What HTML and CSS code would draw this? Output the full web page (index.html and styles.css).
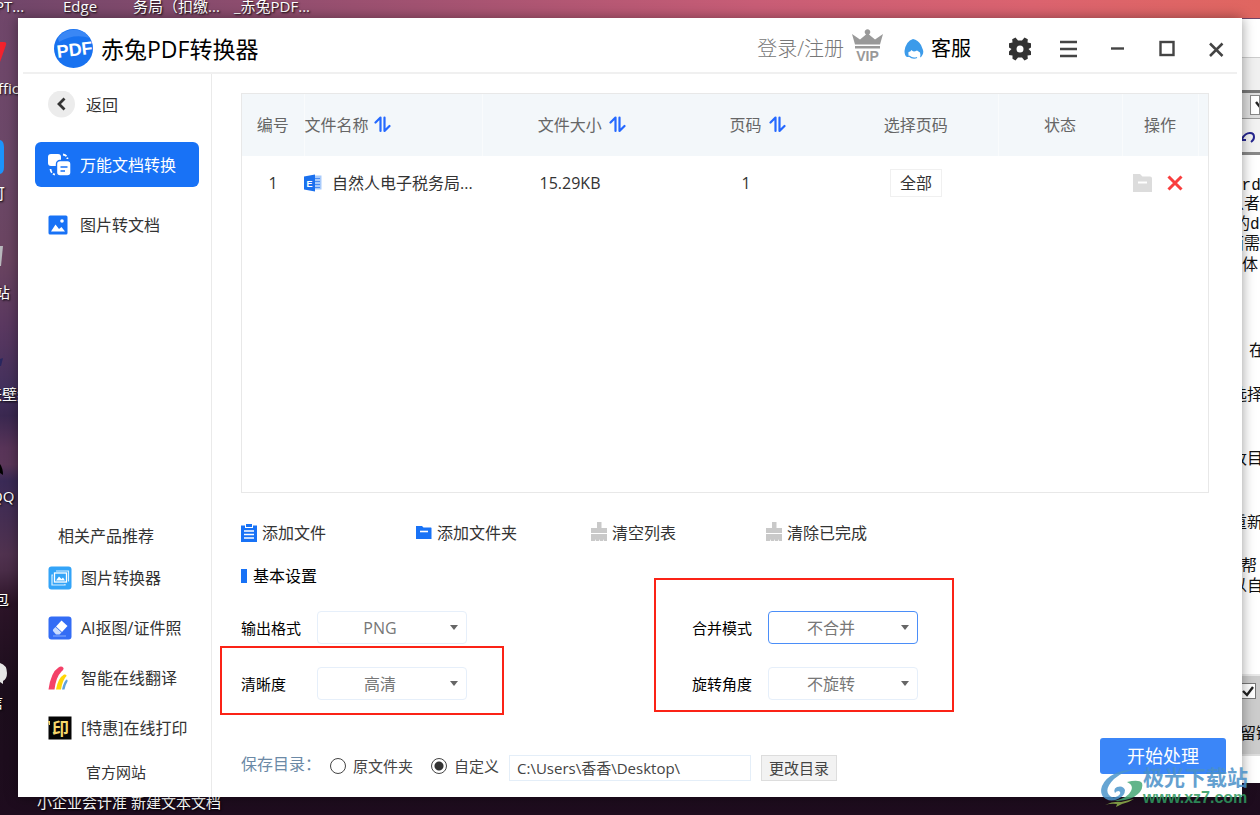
FILE: index.html
```html
<!DOCTYPE html>
<html lang="zh-CN">
<head>
<meta charset="utf-8">
<title>赤兔PDF转换器</title>
<meta name="viewport" content="width=device-width, initial-scale=1">
<link rel="stylesheet" href="styles.css">
</head>
<body>
<div class="desktop">
  <!-- desktop labels and shortcut edges -->
  <span class="desk-label lab-ppt">PT...</span>
  <span class="desk-label lab-edge">Edge</span>
  <span class="desk-label lab-tax">务局（扣缴...</span>
  <span class="desk-label lab-pdf">_赤兔PDF...</span>
  <span class="desk-label lab-office">ffic</span>
  <span class="desk-label lab-cai">可</span>
  <span class="desk-label lab-bin">站</span>
  <span class="desk-label lab-wall">来壁纸</span>
  <span class="desk-label lab-qq">QQ</span>
  <span class="desk-label lab-bao">包</span>
  <span class="desk-label lab-xin">信</span>
  <span class="desk-label lab-docs">小企业会计准 新建文本文档</span>
  <svg class="shortcut sc-red" width="8" height="22" viewBox="0 0 8 22" aria-hidden="true"><path d="M0 1h4q3 0 2 3L0 21z" fill="#f3222c"/></svg>
  <svg class="shortcut sc-blue" width="5" height="34" viewBox="0 0 5 34" aria-hidden="true"><path d="M0 0q4 1 4 7v20q0 6-4 7z" fill="#1c93fb"/></svg>
  <svg class="shortcut sc-bin" width="5" height="22" viewBox="0 0 5 22" aria-hidden="true"><path d="M0 0h3L1 20H0z" fill="#b9b9bd"/></svg>
  <svg class="shortcut sc-wall" width="5" height="10" viewBox="0 0 5 10" aria-hidden="true"><path d="M0 2l3-1-2 8H0z" fill="#29265e"/></svg>
  <svg class="shortcut sc-qq" width="5" height="14" viewBox="0 0 5 14" aria-hidden="true"><path d="M0 1q3 4 3 11l-3-2z" fill="#000"/></svg>
  <svg class="shortcut sc-wx" width="8" height="24" viewBox="0 0 8 24" aria-hidden="true"><path d="M0 1q7 2 7 10 0 6-4 8v3l-3-2z" fill="#e6e6e6"/></svg>

  <!-- document window behind the app -->
  <aside class="doc">
    <div class="doc-title"></div>
    <div class="doc-menu"></div>
    <div class="doc-combo"><span class="doc-drop"><svg width="10" height="18" viewBox="0 0 10 18" aria-hidden="true"><path d="M5 6l4 5" stroke="#222" stroke-width="2.400"/></svg></span></div>
    <div class="doc-tools"><svg width="16" height="14" viewBox="0 0 16 14" aria-hidden="true"><path d="M1 9h5M1 9V5M2 8q3-6 8-6 4 0 4 4 0 3-3 5" fill="none" stroke="#25258f" stroke-width="2"/></svg></div>
    <div class="doc-page">
      <span class="line l1">ord]</span>
      <span class="line l2">以者</span>
      <span class="line l3">的d</span>
      <span class="line l4">面需</span>
      <span class="line l5">体:</span>
      <span class="line l6">在</span>
      <span class="line l7">选择</span>
      <span class="line l8">改目</span>
      <span class="line l9">重新</span>
      <span class="line l10">帮.</span>
      <span class="line l11">以自</span>
    </div>
    <div class="doc-panel"><svg width="16" height="16" viewBox="0 0 16 16" aria-hidden="true"><rect x=".5" y=".5" width="15" height="15" fill="#fff" stroke="#777"/><path d="M3 8l4 4 6-8" fill="none" stroke="#222" stroke-width="2.4"/></svg><span>留链</span></div>
    <div class="doc-status"></div>
  </aside>

  <div class="window">
    <header class="titlebar">
      <svg class="logo" width="39" height="39" viewBox="0 0 39 39" aria-hidden="true"><circle cx="19.500" cy="19.500" r="19.500" fill="#1872f0"/><path d="M5 13Q20 4 36 9A19.500 19.500 0 0 0 4 9z" fill="#3a87f5"/><text class="logo-text" x="20.500" y="27" text-anchor="middle" transform="rotate(-7 19.500 19.500)">PDF</text></svg>
      <h1 class="app-name">赤兔PDF转换器</h1>
      <a class="login" href="#">登录/注册</a>
      <a class="vip" href="#" aria-label="VIP"><svg width="31" height="33" viewBox="0 0 31 33"><path d="M0 5l8 5.500L14 5.500a2.800 2.800 0 1 1 3 0l6 5L31 5l-3 10.500H3zM3 17h25v2.500H3z" fill="#999"/><text class="vip-text" x="15.500" y="31.500" text-anchor="middle">VIP</text></svg></a>
      <a class="service" href="#"><svg width="20" height="20" viewBox="0 0 20 20" aria-hidden="true"><path d="M9 0Q14 1 17 6l2 5q1 3-1.500 6.500l-1.500 1q.8-3 0-5l-3-2q-4 2-5.500-.5-1 2-3 2-.5 2 .5 5L3 18Q.500 17 .500 12 2 2 9 0z" fill="#3c9bea"/><path d="M5 17q4 3.500 8 1.500" fill="none" stroke="#3c9bea" stroke-width="1.200"/></svg><span>客服</span></a>
      <div class="controls">
        <button aria-label="设置"><svg width="24" height="24" viewBox="-12 -12 24 24"><path fill-rule="evenodd" d="M-2-8.500-4.500-11.500-7.800-9.800-7.500-6.500-11-5.800-11-1.500-8.500 0-11 2.500-11 6-7.500 6.500-7.500 9.800-4.500 11.500-2 8.500 2 8.500 4.500 11.500 7.800 9.800 7.500 6.500 11 6 11 2.500 8.500 0 11-1.500 11-5.800 7.500-6.500 7.800-9.800 4.500-11.500 2-8.500zM0-3.500a3.500 3.500 0 1 1 0 7 3.500 3.500 0 0 1 0-7z" fill="#333"/></svg></button>
        <button aria-label="菜单"><svg width="24" height="24" viewBox="0 0 24 24"><path d="M3 5h17M3 12h17M3 19h17" stroke="#444" stroke-width="2.400"/></svg></button>
        <button aria-label="最小化"><svg width="24" height="24" viewBox="0 0 24 24"><path d="M5 11.500h13" stroke="#444" stroke-width="2.400"/></svg></button>
        <button aria-label="最大化"><svg width="24" height="24" viewBox="0 0 24 24"><rect x="5.500" y="5" width="13" height="13" fill="none" stroke="#444" stroke-width="2.400"/></svg></button>
        <button aria-label="关闭"><svg width="24" height="24" viewBox="0 0 24 24"><path d="M6 6.500l12.500 12.500M18.500 6.500L6 19" stroke="#444" stroke-width="2.500"/></svg></button>
      </div>
    </header>

    <div class="body">
      <nav class="sidebar">
        <button class="nav-item back"><svg width="28" height="28" viewBox="0 0 28 28" aria-hidden="true"><circle cx="13.500" cy="13" r="13.500" fill="#ececec"/><path d="M16.500 7.500L11 13l5.500 5.500" fill="none" stroke="#333" stroke-width="2.800"/></svg><span>返回</span></button>
        <button class="nav-item active"><svg width="23" height="23" viewBox="0 0 23 23" aria-hidden="true"><rect x="0" y="1" width="13" height="12" rx="3" fill="#fff"/><rect x="8.500" y="7.500" width="14.500" height="15.500" rx="3.500" fill="#fff" stroke="#1872f6" stroke-width="1.400"/><path d="M12.500 14h7M12.500 18h4.500" stroke="#1872f6" stroke-width="1.700"/><path d="M15 1.500q4 .5 4.500 4.500M2.500 16q.3 4.500 4.500 5.500" fill="none" stroke="#fff" stroke-width="1.800" stroke-dasharray="4 1.500"/></svg><span>万能文档转换</span></button>
        <button class="nav-item"><svg width="20" height="20" viewBox="0 0 20 20" aria-hidden="true"><rect x=".500" y=".500" width="19" height="19" rx="1.500" fill="#1872f6"/><circle cx="14" cy="6" r="1.800" fill="#fff"/><path d="M3 16.500l4.500-7 3.500 4.500 2.500-2 3.500 4.500z" fill="#fff"/></svg><span>图片转文档</span></button>

        <h2 class="promo-title">相关产品推荐</h2>
        <a class="promo" href="#"><svg width="24" height="24" viewBox="0 0 24 24" aria-hidden="true"><rect x=".500" y=".500" width="23" height="23" rx="3" fill="#33a4f8"/><rect x="6.500" y="7" width="12" height="9" fill="none" stroke="#fff" stroke-width="1.300"/><path d="M8 14.500l3-4 2.500 2.500 1.500-1.500 2 3z" fill="#fff"/><path d="M5 9H4v10h13v-1M8 5h12.500v10H20" fill="none" stroke="#d9f0ff" stroke-width="1.200"/></svg><span>图片转换器</span></a>
        <a class="promo" href="#"><svg width="24" height="24" viewBox="0 0 24 24" aria-hidden="true"><rect x=".500" y=".500" width="23" height="23" rx="3" fill="#336cf5"/><path d="M13.500 4.500l6 5.500-5.500 6-6-5.500z" fill="#fff"/><path d="M7.500 11l6 5.500-2 2H8L5 15q-.5-1 .5-2z" fill="#c9dcff"/><path d="M5 20h13" stroke="#86adff"/></svg><span>AI抠图/证件照</span></a>
        <a class="promo" href="#"><svg width="24" height="24" viewBox="0 0 24 24" aria-hidden="true"><path d="M.500 23.500Q3 6 10.500 1.500q3-2 5 .5.500 1.500-2 3.500Q8 11 6.500 23.500z" fill="#f44168"/><path d="M8 23.500Q10 12 16 8.500q3-.5 2.500 1.500-4 4-5.500 13.500z" fill="#ffd507"/><path d="M14 23.500Q15.500 16 18.500 13.500q1.500 0 1 2-2 3-3 8z" fill="#61a2d9"/></svg><span>智能在线翻译</span></a>
        <a class="promo" href="#"><svg width="24" height="24" viewBox="0 0 24 24" aria-hidden="true"><rect x=".500" y=".500" width="23" height="23" fill="#050505"/><path d="M0 5h2v4H1" fill="#f5d56c"/><text class="print-text" x="12.500" y="18.500" text-anchor="middle">印</text></svg><span>[特惠]在线打印</span></a>
        <a class="site" href="#">官方网站</a>
      </nav>

      <main class="main">
        <div class="table-wrap">
          <table class="files">
            <colgroup><col class="c-no"><col class="c-name"><col class="c-size"><col class="c-page"><col class="c-pick"><col class="c-state"><col class="c-act"><col class="c-end"></colgroup>
            <thead>
              <tr>
                <th class="ruled">编号</th>
                <th class="name ruled">文件名称<svg class="sort" width="17" height="17" viewBox="0 0 17 17" aria-hidden="true"><use href="#sort"/></svg></th>
                <th class="sortable">文件大小<svg class="sort" width="17" height="17" viewBox="0 0 17 17" aria-hidden="true"><use href="#sort"/></svg></th>
                <th class="sortable">页码<svg class="sort" width="17" height="17" viewBox="0 0 17 17" aria-hidden="true"><use href="#sort"/></svg></th>
                <th class="ruled">选择页码</th>
                <th class="ruled">状态</th>
                <th class="ruled">操作</th>
                <th></th>
              </tr>
            </thead>
            <tbody>
              <tr>
                <td>1</td>
                <td class="name"><span class="file"><svg width="18" height="18" viewBox="0 0 18 18" aria-hidden="true"><path d="M9 1.500h8.500v14H9z" fill="#a9cbfb"/><path d="M10 4.500h6M10 7.500h6M10 10.500h6M10 13.500h6" stroke="#4b8cf3"/><path d="M0 2.500L11 .500v17l-11-2z" fill="#1a70ee"/><text class="file-text" x="5.500" y="12.500" text-anchor="middle">E</text></svg><span>自然人电子税务局...</span></span></td>
                <td>15.29KB</td>
                <td>1</td>
                <td><button class="pick">全部</button></td>
                <td></td>
                <td><span class="actions">
                  <button aria-label="打开文件夹"><svg width="20" height="20" viewBox="0 0 20 20"><path d="M0 1h7l2.500 2.500H17q2 0 2 2V19H0z" fill="#dcdcdc"/><path d="M5 9.500h9" stroke="#fff" stroke-width="2"/></svg></button>
                  <button aria-label="删除"><svg width="16" height="16" viewBox="0 0 16 16"><path d="M1.500 1.500l13 13M14.500 1.500l-13 13" stroke="#f93e3e" stroke-width="3"/></svg></button>
                </span></td>
                <td></td>
              </tr>
            </tbody>
          </table>
        </div>

        <div class="toolbar">
          <button><svg width="16" height="18" viewBox="0 0 16 18" aria-hidden="true"><path d="M0 1.500h4V4h8V1.500h4V18H0z" fill="#1872f6"/><path d="M5 0h6v3H5z" fill="#1872f6"/><path d="M3 7h10M3 10.500h10M3 14h10" stroke="#fff" stroke-width="1.400"/></svg><span>添加文件</span></button>
          <button><svg width="16" height="18" viewBox="0 0 16 18" aria-hidden="true"><path d="M0 2h6l1.500 1.500H15L15.500 4v11H0z" fill="#1872f6"/><path d="M4 7.500h8" stroke="#fff" stroke-width="1.600"/></svg><span>添加文件夹</span></button>
          <button><svg width="16" height="22" viewBox="0 0 16 22" aria-hidden="true"><use href="#brush"/></svg><span>清空列表</span></button>
          <button><svg width="16" height="22" viewBox="0 0 16 22" aria-hidden="true"><use href="#brush"/></svg><span>清除已完成</span></button>
        </div>

        <section class="settings">
          <h2>基本设置</h2>
          <div class="fields">
            <div class="field"><label for="fmt">输出格式</label><span class="combo"><select id="fmt"><option>PNG</option></select></span></div>
            <div class="field"><label for="merge">合并模式</label><span class="combo focus"><select id="merge"><option>不合并</option></select></span></div>
            <div class="field"><label for="clear">清晰度</label><span class="combo"><select id="clear"><option>高清</option></select></span></div>
            <div class="field"><label for="rot">旋转角度</label><span class="combo"><select id="rot"><option>不旋转</option></select></span></div>
          </div>
          <div class="mark mark-clear"></div>
          <div class="mark mark-merge"></div>
        </section>

        <div class="footer">
          <span class="save-label">保存目录：</span>
          <label class="radio"><input type="radio" name="dir"><span>原文件夹</span></label>
          <label class="radio"><input type="radio" name="dir" checked><span>自定义</span></label>
          <input class="path" type="text" aria-label="保存目录" value="C:\Users\香香\Desktop\">
          <button class="change">更改目录</button>
          <button class="start">开始处理</button>
        </div>
      </main>
    </div>
  </div>

  <!-- watermark -->
  <div class="watermark">
    <svg width="42" height="38" viewBox="0 0 42 38" aria-hidden="true"><path d="M37 0Q22 2 13 10 3 20 8 26q3 4 9 1 4-3 1-5-3 0-4 2-2-4 2-6 6-2 8 3 0 6-7 9-7 3-12 0-7-4-4-13Q8 1 37 0z" fill="#4c96cc"/><path d="M26 13q12-3 15 1 2 8-8 14-8 4-20 4 14-3 17-10 3-6-4-9z" fill="#47a977"/><path d="M4 36q8-4 16-3l13-3q-6 4-12 5l-6 3 1-3q-6-1-12 1z" fill="#8fb04b"/></svg>
    <div class="wm-text"><span class="wm-name">极光下载站</span><span class="wm-url">www.xz7.com</span></div>
  </div>
</div>

<svg class="defs" width="0" height="0" aria-hidden="true">
  <defs>
    <g id="sort" fill="none" stroke="#2468ff" stroke-width="2.200" stroke-linecap="round" stroke-linejoin="round"><path d="M6.500 15V1.500L1.500 6.500"/><path d="M10.500 1.500V15l5-5"/></g>
    <g id="brush" fill="#c9c9c9"><path d="M6 0h4.500v6H16v5H0V6h6z"/><path d="M0 12h16v7h-3v-2l-1 2H9v-2l-1 2H5v-2l-1 2H0z"/></g>
  </defs>
</svg>
</body>
</html>
```
FILE: styles.css
```css
* { box-sizing: border-box; }

body {
  margin: 0;
  font-family: "Open Sans", "Noto Sans CJK SC", sans-serif;
  font-size: 16px;
  line-height: 24px;
  color: #333;
}

button, input, select { font: inherit; color: inherit; }
button { border: 0; padding: 0; background: none; white-space: nowrap; }
a { color: inherit; text-decoration: none; }
h1, h2 { margin: 0; font-weight: 400; }
svg { display: block; flex: none; }
.defs { position: absolute; }

/* desktop */
.desktop {
  position: relative;
  display: flex;
  min-height: 100vh;
  padding: 18px;
  overflow: hidden;
  background:
    linear-gradient(90deg, #70466a, #9a5070 28%, #c85d76 60%, #db636f 82%, #e06660) top / 100% 18px no-repeat,
    linear-gradient(#70466a, #6b4868 20%, #6a4460 32%, #5a3860 40%, #42305c 48%, #3a2850 51%, #583458 55%, #5a3658 57%, #3a2a56 59%, #50324f 68%, #4a2d48 70%, #2c1428 74%, #1c0e1c 85%, #1e0c1e);
}
.desk-label {
  position: absolute;
  font-size: 15px;
  line-height: 20px;
  color: #fff;
  white-space: pre;
  text-shadow: 1px 1px 2px #000;
}
.lab-ppt { left: -5px; top: -4px; }
.lab-edge { left: 63px; top: -4px; }
.lab-tax { left: 133px; top: -4px; }
.lab-pdf { left: 234px; top: -4px; }
.lab-office { left: -2px; top: 78px; }
.lab-cai { left: -10px; top: 183px; }
.lab-bin { left: -5px; top: 282px; }
.lab-wall { left: -13px; top: 384px; }
.lab-qq { left: -9px; top: 486px; }
.lab-bao { left: -6px; top: 589px; }
.lab-xin { left: -12px; top: 692px; }
.lab-docs { left: 37px; bottom: 3px; }
.shortcut { position: absolute; left: 0; }
.sc-red { top: 41px; }
.sc-blue { top: 140px; }
.sc-bin { top: 246px; }
.sc-wall { top: 357px; }
.sc-qq { top: 463px; }
.sc-wx { top: 662px; }

/* document window */
.doc {
  position: absolute;
  top: 19px;
  right: 0;
  bottom: 32px;
  width: 32px;
  display: flex;
  flex-direction: column;
  overflow: hidden;
  background: #fff;
  color: #111;
}
.doc-title { height: 39px; border-bottom: 1px solid #ccc; }
.doc-menu { height: 35px; background: #f0f0f0; border-bottom: 3px solid #777; }
.doc-combo { height: 26px; padding: 2px 0 2px 22px; background: #ddd; border-bottom: 1px solid #999; }
.doc-drop { display: block; height: 20px; background: #fff; border: 1px solid #888; overflow: hidden; }
.doc-tools { height: 36px; padding: 12px 0 0 12px; background: #f2f2f2; border-bottom: 3px solid #888; }
.doc-page { position: relative; flex: 1; }
.line { position: absolute; left: 0; font-family: "Liberation Mono", "Noto Sans CJK SC", monospace; line-height: 20px; white-space: nowrap; }
.l1 { left: 4px; top: 21px; }
.l2 { top: 40px; }
.l3 { left: 6px; top: 60px; }
.l4 { top: 80px; }
.l5 { left: 14px; top: 101px; }
.l6 { left: 21px; top: 187px; }
.l7 { left: 3px; top: 231px; }
.l8 { left: 3px; top: 295px; }
.l9 { left: 3px; top: 359px; }
.l10 { left: 13px; top: 402px; }
.l11 { left: 3px; top: 422px; }
.doc-panel { display: flex; flex-direction: column; gap: 24px; height: 80px; padding: 7px 0 0 12px; background: #ccc; border-top: 2px solid #e8e8e8; line-height: 20px; white-space: nowrap; }
.doc-status { height: 29px; border-top: 2px solid #ddd; }

/* application window */
.window {
  position: relative;
  flex: 1;
  min-width: 0;
  display: flex;
  flex-direction: column;
  background: #fff;
  box-shadow: 0 0 12px rgba(0, 0, 0, .4);
}
.titlebar {
  display: flex;
  align-items: center;
  height: 56px;
  margin: 0 5px;
  padding: 7px 9px 0 31px;
  border-bottom: 2px solid #f0f0f0;
}
.logo-text { font: 700 18px "Liberation Sans", sans-serif; fill: #fff; }
.app-name { flex: 1; margin-left: 8px; font-size: 23px; line-height: 32px; color: #000; white-space: nowrap; }
.login { margin-right: 8px; font-size: 20px; color: #777; font-weight: 300; white-space: nowrap; }
.vip { margin-right: 21px; }
.vip svg { margin-top: -6px; }
.vip-text { font: 700 14px "Liberation Sans", sans-serif; fill: #999; }
.service { display: flex; align-items: center; gap: 7px; margin-right: 37px; font-size: 20px; color: #000; white-space: nowrap; }
.controls { display: flex; gap: 25px; }

.body { flex: 1; display: flex; min-height: 0; }

/* sidebar */
.sidebar {
  width: 194px;
  flex: none;
  display: flex;
  flex-direction: column;
  padding: 8px 12px 6px 17px;
  border-right: 1px solid #eaeaea;
}
.nav-item { display: flex; align-items: center; gap: 9px; height: 45px; margin-bottom: 15px; padding-left: 13px; border-radius: 6px; }
.nav-item:nth-child(3) { gap: 12px; }
.back { gap: 10px; }
.active { background: #1872f6; color: #fff; }
.promo-title { margin: auto 0 5px 23px; font-size: 16px; }
.promo { display: flex; align-items: center; gap: 9px; height: 50px; padding-left: 13px; white-space: nowrap; }
.print-text { font: 700 17px "Noto Sans CJK SC", sans-serif; fill: #f7d86c; }
.site { padding: 7px 0 7px 51px; font-size: 15px; }

/* main area */
.main { flex: 1; min-width: 0; display: flex; flex-direction: column; padding: 19px 16px 0 29px; }
.table-wrap { flex: 1; margin-right: 17px; border: 1px solid #e8e8e8; }
.files { width: 100%; border-collapse: collapse; table-layout: fixed; text-align: center; }
.c-no { width: 62px; }
.c-size, .c-page { width: 176px; }
.c-name { width: 178px; }
.c-pick { width: 164px; }
.c-state { width: 124px; }
.c-act { width: 76px; }
.files th, .files td { padding: 0; }
.files th { height: 62px; background: #f3f7fa; font-weight: 400; color: #666; }
.files td { height: 54px; }
.files .ruled { border-right: 1px solid #f9fbfc; }
.files .name { text-align: left; }
.files .sortable { padding-left: 23px; }
.sort { display: inline-block; margin-left: 7px; vertical-align: -2px; }
.name .sort { margin-left: 5px; }
.file { display: flex; align-items: center; gap: 10px; white-space: nowrap; }
.file-text { font: 700 9px "Liberation Sans", sans-serif; fill: #fff; }
.pick { height: 28px; padding: 0 9px; border: 1px solid #f0f0f0; }
.actions { display: flex; align-items: center; justify-content: center; gap: 14px; margin-right: 4px; }

.toolbar { display: grid; grid-template-columns: repeat(4, 175px); align-items: center; height: 40px; margin-top: 20px; }
.toolbar button { display: flex; align-items: center; gap: 5px; }

.settings { position: relative; margin-top: 11px; color: #000; }
.settings h2 { display: flex; align-items: center; gap: 6px; font-size: 16px; }
.settings h2::before { content: ""; width: 6px; height: 14px; background: #1872f6; }
.fields { display: grid; grid-template-columns: 226px 226px; gap: 23px 225px; margin-top: 23px; }
.field { display: flex; align-items: center; justify-content: space-between; height: 33px; }
.field label { font-size: 15px; }
.combo { position: relative; width: 150px; height: 33px; }
.combo select {
  width: 100%;
  height: 100%;
  padding: 0 24px 0 0;
  appearance: none;
  border: 1px solid #e6effa;
  border-radius: 4px;
  background: #fff;
  color: #777;
  text-align: center;
  text-align-last: center;
}
.combo::after {
  content: "";
  position: absolute;
  right: 9px;
  top: 14px;
  border: 4px solid transparent;
  border-top: 5px solid #666;
  border-bottom: 0;
}
.focus select { border-color: #4b8ef8; }
.mark { position: absolute; border: 2px solid #fb2316; pointer-events: none; }
.mark-clear { left: -21px; top: 82px; width: 284px; height: 69px; }
.mark-merge { left: 413px; top: 14px; width: 300px; height: 134px; }

.footer { display: flex; align-items: center; height: 59px; margin-top: 38px; color: #444; font-size: 15px; white-space: nowrap; }
.save-label { margin-bottom: 8px; font-size: 16px; color: #6b89a6; }
.radio { display: flex; align-items: center; gap: 7px; margin: 0 18px 4px 0; }
.save-label + .radio { margin-left: 9px; }
.radio input { appearance: none; width: 16px; height: 16px; margin: 0; border: 1px solid #444; border-radius: 50%; }
.radio input:checked { background: radial-gradient(#333 0 4px, transparent 5px); }
.path { width: 242px; height: 26px; margin-left: -8px; padding: 0 7px; border: 1px solid #e4eef8; background: #fff; }
.change { height: 26px; margin-left: 10px; padding: 0 7px; border: 1px solid #ddd; background: #f2f2f2; }
.start { align-self: flex-start; width: 126px; height: 36px; margin-left: auto; border-radius: 3px; background: #3b86f8; color: #fff; font-size: 18px; }

/* watermark */
.watermark { position: absolute; right: 12px; bottom: 8px; display: flex; align-items: flex-end; opacity: .85; pointer-events: none; }
.wm-text { display: flex; flex-direction: column; white-space: nowrap; }
.wm-name { font-weight: 700; font-size: 21px; line-height: 24px; color: #4a90c8; }
.wm-url { font: 700 16px/18px "Liberation Sans", sans-serif; color: #2f9a60; }
```
